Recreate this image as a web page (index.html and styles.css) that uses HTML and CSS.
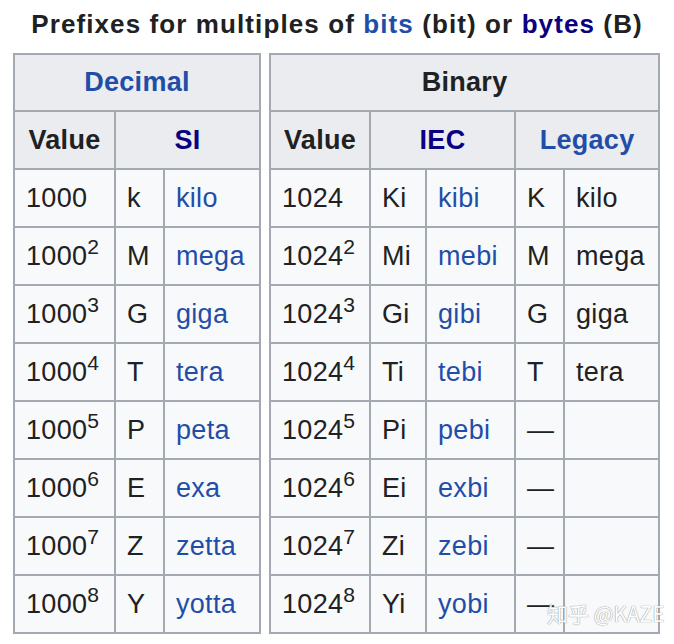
FILE: index.html
```html
<!DOCTYPE html>
<html>
<head>
<meta charset="utf-8">
<link rel="stylesheet" href="styles.css">
</head>
<body>
<div class="page">
  <div class="title">Prefixes for multiples of <span class="link">bits</span> (bit) or <span class="visited">bytes</span> (B)</div>
  <div class="tables">
    <table class="tbl tbl-dec">
      <colgroup><col class="c-val"><col class="c-sym"><col class="c-name"></colgroup>
      <tr class="h1"><th colspan="3"><span class="link">Decimal</span></th></tr>
      <tr class="h2"><th>Value</th><th colspan="2"><span class="visited">SI</span></th></tr>
      <tr><td>1000</td><td>k</td><td><span class="link">kilo</span></td></tr>
      <tr><td>1000<sup>2</sup></td><td>M</td><td><span class="link">mega</span></td></tr>
      <tr><td>1000<sup>3</sup></td><td>G</td><td><span class="link">giga</span></td></tr>
      <tr><td>1000<sup>4</sup></td><td>T</td><td><span class="link">tera</span></td></tr>
      <tr><td>1000<sup>5</sup></td><td>P</td><td><span class="link">peta</span></td></tr>
      <tr><td>1000<sup>6</sup></td><td>E</td><td><span class="link">exa</span></td></tr>
      <tr><td>1000<sup>7</sup></td><td>Z</td><td><span class="link">zetta</span></td></tr>
      <tr><td>1000<sup>8</sup></td><td>Y</td><td><span class="link">yotta</span></td></tr>
    </table>
    <table class="tbl tbl-bin">
      <colgroup><col class="b-val"><col class="b-sym"><col class="b-name"><col class="b-lsym"><col class="b-lname"></colgroup>
      <tr class="h1"><th colspan="5">Binary</th></tr>
      <tr class="h2"><th>Value</th><th colspan="2"><span class="visited">IEC</span></th><th colspan="2"><span class="link">Legacy</span></th></tr>
      <tr><td>1024</td><td>Ki</td><td><span class="link">kibi</span></td><td>K</td><td>kilo</td></tr>
      <tr><td>1024<sup>2</sup></td><td>Mi</td><td><span class="link">mebi</span></td><td>M</td><td>mega</td></tr>
      <tr><td>1024<sup>3</sup></td><td>Gi</td><td><span class="link">gibi</span></td><td>G</td><td>giga</td></tr>
      <tr><td>1024<sup>4</sup></td><td>Ti</td><td><span class="link">tebi</span></td><td>T</td><td>tera</td></tr>
      <tr><td>1024<sup>5</sup></td><td>Pi</td><td><span class="link">pebi</span></td><td class="dash">—</td><td></td></tr>
      <tr><td>1024<sup>6</sup></td><td>Ei</td><td><span class="link">exbi</span></td><td class="dash">—</td><td></td></tr>
      <tr><td>1024<sup>7</sup></td><td>Zi</td><td><span class="link">zebi</span></td><td class="dash">—</td><td></td></tr>
      <tr><td>1024<sup>8</sup></td><td>Yi</td><td><span class="link">yobi</span></td><td class="dash">—</td><td></td></tr>
    </table>
  </div>
  <div class="watermark">知乎 @KAZE</div>
</div>
</body>
</html>
```
FILE: styles.css
```css
html, body {
  margin: 0;
  padding: 0;
  background: #ffffff;
}
.page {
  position: relative;
  width: 674px;
  height: 644px;
  font-family: "Liberation Sans", Arial, sans-serif;
  color: #202122;
}
.title {
  height: 53px;
  line-height: 48px;
  font-size: 26px;
  font-weight: bold;
  letter-spacing: 1.1px;
  text-align: center;
  width: 674px;
}
.link { color: #1f4ea8; }
.visited { color: #0b0080; }
.tables {
  display: flex;
  gap: 8px;
  padding-left: 13px;
  align-items: flex-start;
}
.tbl {
  border-collapse: collapse;
  table-layout: fixed;
  font-size: 27px;
  letter-spacing: 0.3px;
  background: #f8f9fa;
}
.tbl-dec { width: 248px; }
.tbl-bin { width: 391px; }
.c-val { width: 101px; }
.c-sym { width: 49px; }
.c-name { width: 96px; }
.b-val { width: 100px; }
.b-sym { width: 56px; }
.b-name { width: 89px; }
.b-lsym { width: 49px; }
.b-lname { width: 95px; }
.tbl th, .tbl td {
  border: 2px solid #a2a9b1;
  padding: 0 8px 0 11px;
  vertical-align: middle;
  white-space: nowrap;
  overflow: visible;
}
.tbl th {
  background: #eaecf0;
  font-weight: bold;
  text-align: center;
  padding: 0 4px;
}
.tbl td { text-align: left; }
.tbl tr { height: 58px; }
.tbl tr.h1 { height: 57px; }
.tbl sup {
  font-size: 0.78em;
  line-height: 0;
  vertical-align: 0.5em;
}
.watermark {
  position: absolute;
  left: 547px;
  top: 598px;
  font-size: 21px;
  color: #ffffff;
  text-shadow: 0 0 1px #8d8d8d, 0 0 1px #8d8d8d;
  font-family: "Noto Sans CJK SC", "Liberation Sans", sans-serif;
  opacity: 0.9;
}
```
